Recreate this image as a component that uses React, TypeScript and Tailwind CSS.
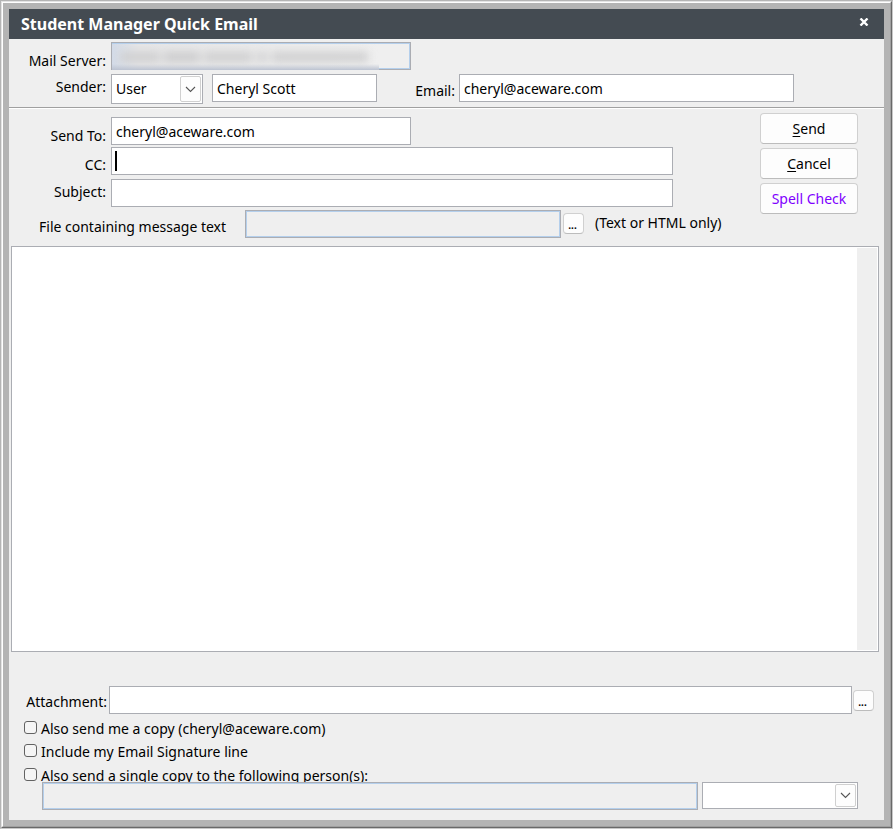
import type { ReactNode, SelectHTMLAttributes, InputHTMLAttributes } from "react";

const FIELD =
  "block h-7 min-w-0 border border-[#abadb3] bg-white px-1 text-sm text-black outline-none";
const READONLY =
  "block h-7 min-w-0 border border-[#abadb3] bg-[#efefef] px-1 text-sm shadow-[inset_0_0_0_1px_#b4cfec] outline-none";
const LABEL = "w-[97px] shrink-0 text-right text-sm leading-5 whitespace-nowrap";

function Field({ className = "", ...rest }: InputHTMLAttributes<HTMLInputElement>) {
  return <input type="text" className={`${FIELD} ${className}`} {...rest} />;
}

function Select({
  className = "",
  children,
  ...rest
}: SelectHTMLAttributes<HTMLSelectElement> & { children: ReactNode }) {
  return (
    <div className={`relative shrink-0 ${className}`}>
      <select
        className="block h-full w-full appearance-none border border-[#abadb3] bg-white pr-6 pl-1 text-sm text-black outline-none"
        {...rest}
      >
        {children}
      </select>
      <span className="pointer-events-none absolute inset-y-0.5 right-0.5 flex w-[21px] items-center justify-center rounded-xs border border-[#d0d0d0] bg-[#fdfdfd]">
        <svg width="11" height="7" viewBox="0 0 11 7" fill="none" stroke="#555" strokeWidth="1.1">
          <path d="M1 1l4.5 4.5L10 1" />
        </svg>
      </span>
    </div>
  );
}

function BrowseButton({ label }: { label: string }) {
  return (
    <button
      type="button"
      aria-label={label}
      className="flex h-[21px] w-[21px] shrink-0 items-end justify-center rounded border border-[#d0d0d0] border-b-[#bcbcbc] bg-[#fdfdfd] pr-0.5 text-[10px] leading-4 font-bold text-black"
    >
      ...
    </button>
  );
}

function ActionButton({ children, className = "" }: { children: ReactNode; className?: string }) {
  return (
    <button
      type="button"
      className={`h-[31px] w-full rounded border border-[#d0d0d0] border-b-[#bcbcbc] bg-[#fdfdfd] text-sm whitespace-nowrap ${className}`}
    >
      {children}
    </button>
  );
}

function Check({ id, children }: { id: string; children: ReactNode }) {
  return (
    <div className="flex h-[23px] items-start gap-1">
      <input
        id={id}
        type="checkbox"
        className="mt-[3px] h-[13px] w-[13px] shrink-0 appearance-none rounded-[3px] border border-[#626262] bg-[#f5f5f5] checked:bg-[#0067c0]"
      />
      <label htmlFor={id} className="pt-px text-sm leading-5 whitespace-nowrap">
        {children}
      </label>
    </div>
  );
}

export default function App() {
  return (
    <div className="flex min-h-screen flex-col border-t border-r border-b border-l border-t-[#b4b4b4] border-r-[#c8c8c8] border-b-[#c8c8c8] border-l-[#b4b4b4] bg-[#b4b4b4] font-['Noto_Sans','Open_Sans',sans-serif] text-black">
      <div className="flex grow flex-col border border-t-[#e3e3e3] border-r-[#696969] border-b-[#696969] border-l-[#e3e3e3]">
        <div className="flex grow flex-col border border-t-white border-r-[#a0a0a0] border-b-[#a0a0a0] border-l-white p-1.5">
          <header className="flex h-[30px] items-center justify-between bg-[#444b52] pr-[15px] pl-3 text-white">
            <h1 className="text-base leading-5 font-bold">Student Manager Quick Email</h1>
            <button type="button" aria-label="Close" className="mb-[5px]">
              <svg width="10" height="8" viewBox="0 0 10 8" stroke="white" strokeWidth="2.4">
                <path d="M1.5 0.5l7 7M8.5 0.5l-7 7" />
              </svg>
            </button>
          </header>

          <form className="flex grow flex-col bg-[#efefef] pb-2.5" onSubmit={(e) => e.preventDefault()}>
            <section className="flex flex-col gap-1 border-b border-[#a0a0a0] pt-[3px] pb-[3px] shadow-[0_1px_0_white]">
              <div className="flex h-7 items-start gap-[5px]">
                <label htmlFor="server" className={`${LABEL} pt-[9px]`}>
                  Mail Server:
                </label>
                <div className="relative w-[300px]">
                  <input id="server" type="text" readOnly className={`${READONLY} w-full`} />
                  <div className="pointer-events-none absolute top-0.5 bottom-0 left-px w-[267px] overflow-hidden bg-linear-to-r from-[#d3dbe8] via-[#e6e6e7] via-10% to-[#efefef]">
                    <div className="flex h-full items-center gap-1 pl-2 blur-xs">
                      <span className="h-2.5 w-10 bg-[#cfcfd0]" />
                      <span className="h-2.5 w-9 bg-[#cccccd]" />
                      <span className="h-2.5 w-12 bg-[#cfcfd0]" />
                      <span className="h-2.5 w-3 bg-[#d4d4d5]" />
                      <span className="h-2.5 w-24 bg-[#cfcfd0]" />
                    </div>
                    <div className="absolute inset-x-0 bottom-0 h-1.5 bg-linear-to-b from-transparent to-[#bcc3d1]" />
                  </div>
                </div>
              </div>
              <div className="flex items-start">
                <label htmlFor="sender" className={`${LABEL} mr-[5px] pt-[3px]`}>
                  Sender:
                </label>
                <Select id="sender" className="mr-[9px] h-[30px] w-[92px]" defaultValue="User">
                  <option>User</option>
                </Select>
                <Field aria-label="Sender name" className="w-[165px]" defaultValue="Cheryl Scott" />
                <label htmlFor="email" className="w-[78px] shrink-0 pt-[7px] text-right text-sm leading-5">
                  Email:
                </label>
                <Field id="email" className="mr-[90px] ml-1 flex-1" defaultValue="cheryl@aceware.com" />
              </div>
            </section>

            <section className="flex items-start pt-[5px] pr-[26px]">
              <div className="flex min-w-0 flex-1 flex-col pt-1 pr-[87px]">
                <div className="flex h-7 items-start gap-[5px]">
                  <label htmlFor="to" className={`${LABEL} pt-[9px]`}>
                    Send To:
                  </label>
                  <Field id="to" className="w-[300px]" defaultValue="cheryl@aceware.com" />
                </div>
                <div className="mt-0.5 flex h-7 items-start gap-[5px]">
                  <label htmlFor="cc" className={`${LABEL} pt-2`}>
                    CC:
                  </label>
                  <div className="relative flex-1">
                    <Field id="cc" className="w-full caret-transparent" />
                    <span className="pointer-events-none absolute top-1 left-1 h-5 w-0.5 bg-black" />
                  </div>
                </div>
                <div className="mt-1 flex h-7 items-start gap-[5px]">
                  <label htmlFor="subject" className={`${LABEL} pt-[3px]`}>
                    Subject:
                  </label>
                  <Field id="subject" className="flex-1" />
                </div>
              </div>
              <div className="flex w-[98px] shrink-0 flex-col gap-1">
                <ActionButton>
                  <u className="underline-offset-2">S</u>end
                </ActionButton>
                <ActionButton>
                  <u className="underline-offset-2">C</u>ancel
                </ActionButton>
                <div className="h-6">
                  <ActionButton className="text-[#8000ff]">Spell Check</ActionButton>
                </div>
              </div>
            </section>

            <div className="mt-[3px] flex h-7 items-start pl-[30px]">
              <label htmlFor="file" className="w-[206px] shrink-0 pt-[7px] text-sm leading-5">
                File containing message text
              </label>
              <input id="file" type="text" readOnly className={`${READONLY} w-[316px]`} />
              <div className="pt-[3px] pl-0.5">
                <BrowseButton label="Browse for message file" />
              </div>
              <span className="pt-[3px] pl-[11px] text-sm leading-5">(Text or HTML only)</span>
            </div>

            <div className="mt-2 mr-[5px] ml-0.5 flex min-h-[406px] grow border border-[#abadb3] bg-white">
              <textarea aria-label="Message" className="block grow resize-none bg-white p-1 text-sm outline-none" />
              <div className="my-px mr-px w-5 bg-[#efefef]" />
            </div>

            <div className="mt-[34px] flex items-start pr-2.5">
              <label htmlFor="attachment" className="mr-0.5 w-[98px] shrink-0 pt-1.5 text-right text-sm leading-5">
                Attachment:
              </label>
              <Field id="attachment" className="flex-1" />
              <div className="pt-1 pl-px">
                <BrowseButton label="Browse for attachment" />
              </div>
            </div>

            <div className="flex flex-col pt-1 pl-[15px]">
              <Check id="copy">Also send me a copy (cheryl@aceware.com)</Check>
              <Check id="signature">Include my Email Signature line</Check>
              <div className="h-[18px] pt-px">
                <Check id="others">Also send a single copy to the following person(s):</Check>
              </div>
            </div>
            <div className="flex items-start gap-1 pr-[26px] pl-[33px]">
              <input type="text" readOnly aria-label="Other recipients" className={`${READONLY} flex-1`} />
              <Select aria-label="Recipient type" className="h-[27px] w-[156px]" defaultValue="">
                <option value=""></option>
              </Select>
            </div>
          </form>
        </div>
      </div>
    </div>
  );
}
